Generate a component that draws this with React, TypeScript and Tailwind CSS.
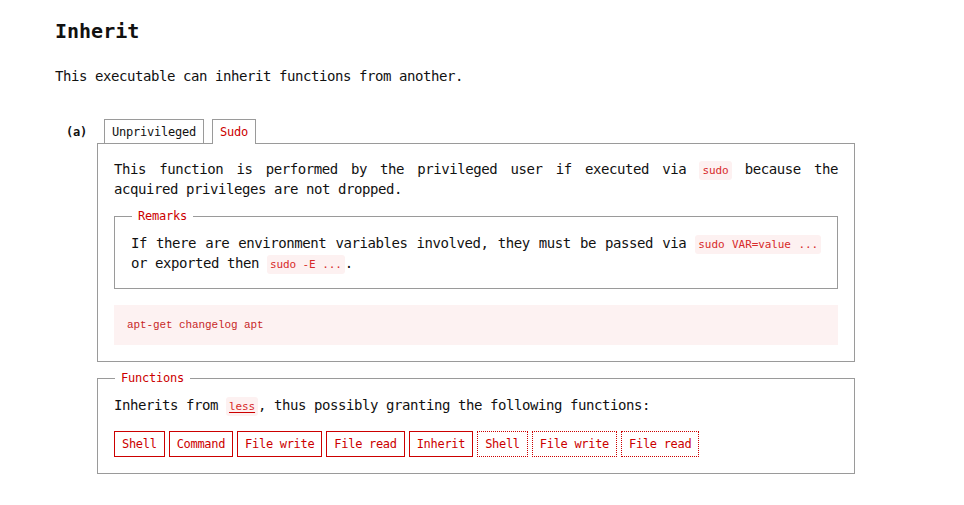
import { useState } from 'react'

const mono = "font-['DejaVu_Sans_Mono',monospace]"

const functions = [
  { label: 'Shell', inherited: false },
  { label: 'Command', inherited: false },
  { label: 'File write', inherited: false },
  { label: 'File read', inherited: false },
  { label: 'Inherit', inherited: false },
  { label: 'Shell', inherited: true },
  { label: 'File write', inherited: true },
  { label: 'File read', inherited: true },
]

function Code({ children }: { children: React.ReactNode }) {
  return (
    <code
      className={`${mono} whitespace-nowrap rounded-[3px] bg-[#fdf1f1] px-[3px] py-[3px] text-[11px] leading-none tracking-[-0.1px] text-[#d72a2a]`}
    >
      {children}
    </code>
  )
}

export default function App() {
  const [tab, setTab] = useState<'unprivileged' | 'sudo'>('sudo')

  return (
    <div
      className={`${mono} min-h-[505px] bg-white pl-[55px] pr-[109px] pt-[19px] text-[14px] leading-[20px] tracking-[-0.43px] text-[#111]`}
    >
      <h1 className="text-[20px] font-bold leading-[24px] tracking-normal">Inherit</h1>

      <p className="mt-[23px]">This executable can inherit functions from another.</p>

      <div className="mt-[33px] flex">
        <div className="w-[42px] shrink-0 pl-[11px] pt-[3px] text-[12px] font-bold leading-[20px] tracking-[-0.2px]">
          (a)
        </div>

        <div className="flex-1">
          {/* tabs */}
          <div className="flex gap-2 pl-[7px] text-[12px] leading-[16px] tracking-[-0.22px]">
            <button
              type="button"
              onClick={() => setTab('unprivileged')}
              className={`border border-b-0 border-[#9a9a9a] bg-white px-[7px] pb-[3px] pt-[4px] ${
                tab === 'unprivileged' ? 'relative z-10 -mb-px pb-[4px] text-[#c00]' : 'text-[#111]'
              }`}
            >
              Unprivileged
            </button>
            <button
              type="button"
              onClick={() => setTab('sudo')}
              className={`border border-b-0 border-[#9a9a9a] bg-white px-[7px] pb-[3px] pt-[4px] ${
                tab === 'sudo' ? 'relative z-10 -mb-px pb-[4px] text-[#c00]' : 'text-[#111]'
              }`}
            >
              Sudo
            </button>
          </div>

          <div className="border border-[#9a9a9a] px-4 pb-[16px] pt-[15px]">
            {tab === 'sudo' ? (
              <>
                <p className="text-justify">
                  This function is performed by the privileged user if executed via <Code>sudo</Code> because the
                  acquired privileges are not dropped.
                </p>

                <fieldset className="mt-[9px] border border-[#9a9a9a] px-4 pb-[15px] pt-[9px]">
                  <legend className="ml-px px-[6px] text-[12px] leading-[16px] tracking-[-0.22px] text-[#c00]">
                    Remarks
                  </legend>
                  <p className="text-justify">
                    If there are environment variables involved, they must be passed via{' '}
                    <Code>sudo VAR=value ...</Code> or exported then <Code>sudo -E ...</Code>.
                  </p>
                </fieldset>
              </>
            ) : (
              <p className="text-justify">
                This function is performed by the current user, no privileges are acquired.
              </p>
            )}

            <pre className="mt-4 bg-[#fdf2f2] px-[13px] py-[12px] text-[11px] leading-[16px] tracking-[-0.1px] text-[#c82828]">
              apt-get changelog apt
            </pre>
          </div>

          <fieldset className="mt-2 border border-[#9a9a9a] px-4 pb-[16px] pt-[9px]">
            <legend className="ml-px px-[6px] text-[12px] leading-[16px] tracking-[-0.22px] text-[#c00]">
              Functions
            </legend>
            <p>
              Inherits from{' '}
              <a href="#less" className="underline decoration-[#c00] underline-offset-2">
                <Code>less</Code>
              </a>
              , thus possibly granting the following functions:
            </p>

            <div className="mt-4 flex flex-wrap gap-1 text-[12px] leading-[16px] tracking-[-0.3px] text-[#c00]">
              {functions.map((f, i) => (
                <a
                  key={i}
                  href="#"
                  className={`border border-[#c00] px-[7px] py-[4px] ${f.inherited ? 'border-dotted' : ''}`}
                >
                  {f.label}
                </a>
              ))}
            </div>
          </fieldset>
        </div>
      </div>
    </div>
  )
}
